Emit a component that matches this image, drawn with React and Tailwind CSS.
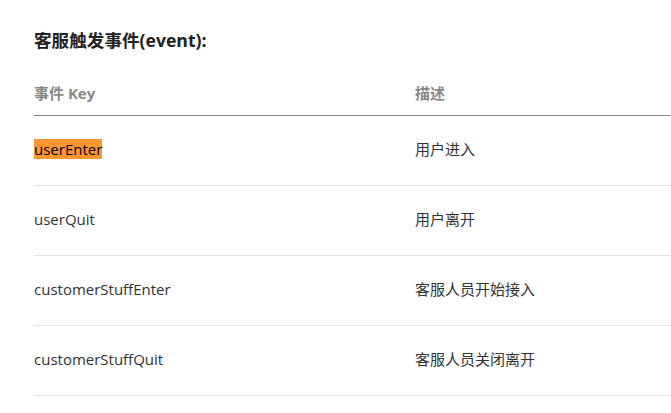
const rows = [
    { key: 'userEnter', desc: '用户进入', highlight: true },
    { key: 'userQuit', desc: '用户离开' },
    { key: 'customerStuffEnter', desc: '客服人员开始接入' },
    { key: 'customerStuffQuit', desc: '客服人员关闭离开' },
];

export default function App() {
    return (
        <div
            className="w-[671px] h-[413px] overflow-hidden bg-white pl-[34px] pt-[29px] text-[#333]"
            style={{ fontFamily: '"Open Sans", "Noto Sans CJK SC", sans-serif' }}
        >
            <h3 className="text-[17.6px] font-bold leading-[22px] text-[#222]">客服触发事件(event):</h3>

            <table className="mt-[31px] w-[760px] border-collapse text-[15px]">
                <thead>
                    <tr className="border-b border-[#888]">
                        <th className="w-[381px] pb-[11px] text-left font-bold leading-[22px] text-[#888]">事件 Key</th>
                        <th className="pb-[11px] text-left font-bold leading-[22px] text-[#888]">描述</th>
                    </tr>
                </thead>
                <tbody>
                    {rows.map((row) => (
                        <tr key={row.key} className="border-b border-[#e4e4e4]">
                            <td className="pt-[22px] pb-[24px] leading-[23px]">
                                {row.highlight ? (
                                    <span className="bg-[#ff9632] text-black">{row.key}</span>
                                ) : (
                                    row.key
                                )}
                            </td>
                            <td className="pt-[22px] pb-[24px] leading-[23px]">{row.desc}</td>
                        </tr>
                    ))}
                </tbody>
            </table>
        </div>
    );
}
